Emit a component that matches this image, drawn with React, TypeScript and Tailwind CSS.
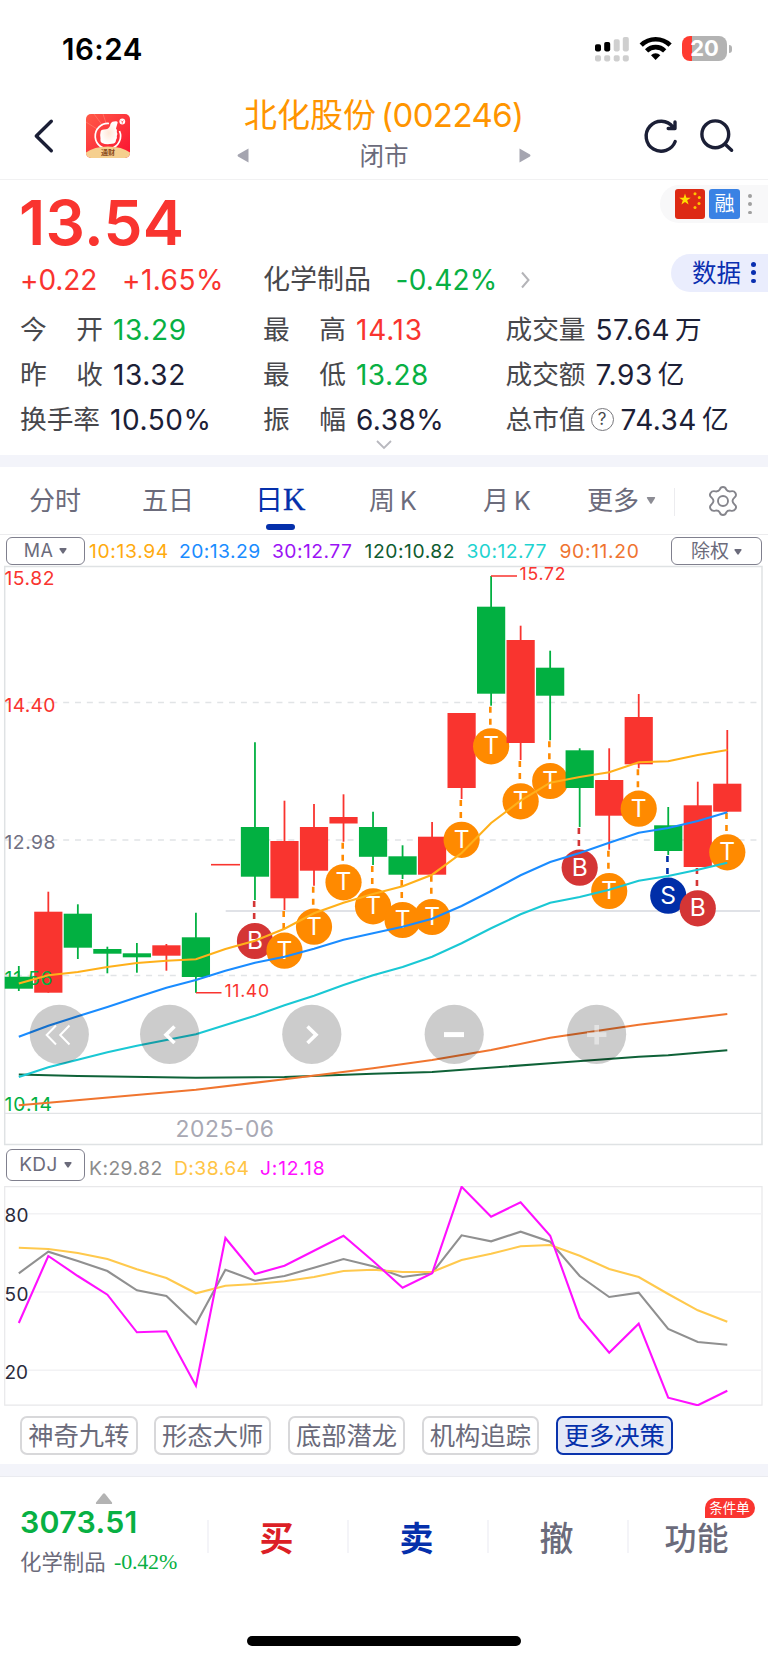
import React from "react";

const RED = "#f9342f";
const GREEN = "#02b041";
const ORANGE = "#ff8a00";
const BUY = "#d43535";
const SELL = "#002ea8";

type Mark = { kind: "T" | "B" | "S"; y: number };
type Candle = { up: boolean; high: number; top: number; bottom: number; low: number; mark?: Mark };

const candles: (Candle | null)[] = [
  { up: false, high: 966, top: 976.7, bottom: 988.7, low: 991 },
  { up: true, high: 891.7, top: 911.7, bottom: 992.7, low: 992.7 },
  { up: false, high: 904.3, top: 913.7, bottom: 947.7, low: 959 },
  { up: false, high: 946.7, top: 949, bottom: 953.7, low: 973.3 },
  { up: false, high: 943, top: 953.3, bottom: 957.3, low: 972.7 },
  { up: true, high: 944, top: 945.3, bottom: 955.7, low: 970.7 },
  { up: false, high: 912.7, top: 937.3, bottom: 977, low: 992.7 },
  null,
  { up: false, high: 742.3, top: 827, bottom: 876.7, low: 900, mark: { kind: "B", y: 941 } },
  { up: true, high: 800.7, top: 841, bottom: 898.3, low: 910, mark: { kind: "T", y: 950.7 } },
  { up: true, high: 804, top: 827, bottom: 870.7, low: 885.7, mark: { kind: "T", y: 926.7 } },
  { up: true, high: 794.3, top: 817, bottom: 823.5, low: 841.7, mark: { kind: "T", y: 882.3 } },
  { up: false, high: 811.7, top: 827, bottom: 856.8, low: 865, mark: { kind: "T", y: 906.3 } },
  { up: false, high: 845.3, top: 856.3, bottom: 874.7, low: 879, mark: { kind: "T", y: 920 } },
  { up: true, high: 822, top: 836.7, bottom: 874.7, low: 874.7, mark: { kind: "T", y: 917 } },
  { up: true, high: 713, top: 713, bottom: 788, low: 799, mark: { kind: "T", y: 839.8 } },
  { up: false, high: 576, top: 606.7, bottom: 693.7, low: 705.7, mark: { kind: "T", y: 746.3 } },
  { up: true, high: 625.7, top: 640, bottom: 743, low: 760, mark: { kind: "T", y: 801.3 } },
  { up: false, high: 650.7, top: 667.7, bottom: 695.7, low: 740.3, mark: { kind: "T", y: 781 } },
  { up: false, high: 748.3, top: 750.3, bottom: 788, low: 827, mark: { kind: "B", y: 867.7 } },
  { up: true, high: 748.3, top: 780, bottom: 815.7, low: 849.7, mark: { kind: "T", y: 891 } },
  { up: true, high: 694, top: 717, bottom: 764.3, low: 768.3, mark: { kind: "T", y: 808.7 } },
  { up: false, high: 807, top: 825.3, bottom: 851, low: 855, mark: { kind: "S", y: 895.7 } },
  { up: true, high: 781.7, top: 805.3, bottom: 867, low: 867, mark: { kind: "B", y: 908.3 } },
  { up: true, high: 730, top: 783.7, bottom: 811.7, low: 812, mark: { kind: "T", y: 852.3 } },
];

const cx = (i: number) => 18.8 + 29.52 * i;
const line = (ys: number[]) => ys.map((y, i) => `${cx(i).toFixed(1)},${y}`).join(" ");
const sparse = (ps: number[][]) => ps.map(([i, y]) => `${cx(i).toFixed(1)},${y}`).join(" ");

const ma10 = [983.5, 975.3, 972, 967, 963, 960.7, 959.3, 949, 940.7, 928.7, 913.3, 902.7, 894, 886.3, 874.7, 853, 823, 800.7, 782.7, 777, 772.3, 762.3, 761.3, 755, 750];
const ma20 = [1036.7, 1025.7, 1016.3, 1007, 997.3, 987.7, 980, 970.7, 962.7, 956.7, 948.7, 939.7, 933.3, 926.7, 918.7, 906, 891, 875.3, 862, 853, 842.7, 832.7, 828, 821, 812.3];
const ma30 = [1077, 1067.3, 1059.7, 1052.3, 1045.7, 1040, 1034.3, 1025, 1015.7, 1005.3, 995.7, 985, 975.3, 967, 956.7, 943.3, 928.3, 914.3, 902.7, 897, 889.7, 880.7, 876, 869.7, 862.7];
const ma120 = [[0, 1074.5], [2, 1076], [6, 1077.7], [9, 1077], [12, 1073.8], [14, 1072], [18, 1063.3], [21, 1056.7], [22, 1055.3], [24, 1050.3]];
const ma90 = [[0, 1105.3], [1, 1102.7], [6, 1089.7], [9, 1079.3], [12, 1068.3], [14, 1060], [16, 1050], [18, 1037.7], [21, 1024.7], [24, 1014]];

const kLine = [1273.3, 1251.7, 1261, 1271, 1290.3, 1296, 1324, 1269.7, 1280.7, 1276, 1267.7, 1259, 1266.3, 1277, 1273, 1235.3, 1241.3, 1231.7, 1241.7, 1276, 1297, 1292.7, 1329, 1342, 1344.7];
const dLine = [1247.7, 1249, 1253, 1259, 1269.3, 1278, 1293.3, 1285.7, 1284, 1281.3, 1277, 1271, 1269.7, 1272, 1272, 1260, 1253.7, 1246.3, 1245, 1255.7, 1269, 1277, 1294, 1310.3, 1321.7];
const jLine = [1323, 1256, 1276, 1294.7, 1332.3, 1331.3, 1385.7, 1238, 1274, 1265.7, 1250.7, 1235.7, 1261, 1287.7, 1273.3, 1186.8, 1216.7, 1202.3, 1235.7, 1317.7, 1352.7, 1323.7, 1397.7, 1405.3, 1390.7];

const INTER = 'Inter, "Noto Sans CJK SC", sans-serif';

function CandleShape({ c, x }: { c: Candle; x: number }) {
  const color = c.up ? RED : GREEN;
  const m = c.mark;
  const mc = m ? (m.kind === "T" ? ORANGE : m.kind === "B" ? BUY : SELL) : "";
  return (
    <g>
      <line x1={x} x2={x} y1={c.high} y2={c.low} stroke={color} strokeWidth="1.8" />
      <rect x={x - 14.1} y={c.top} width="28.2" height={c.bottom - c.top} fill={color} />
      {m && (
        <g>
          <line x1={x - 0.8} x2={x - 0.8} y1={c.low + 1} y2={m.y - 18} stroke={mc} strokeWidth="2.6" strokeDasharray="6 6" />
          <circle cx={x} cy={m.y} r="18.1" fill={mc} />
          <text x={x} y={m.y + 7.8} textAnchor="middle" fontSize="24.5" fill="#fff" fontFamily={INTER}>
            {m.kind}
          </text>
        </g>
      )}
    </g>
  );
}

function PriceChart() {
  return (
    <svg className="block h-[580px] w-[768px] overflow-visible" viewBox="0 566 768 580" fill="none">
      <path d="M4.7 1144.5V566.6H762V1144.5Z" stroke="#dfe2e4" strokeWidth="1.5" />
      <path d="M4.7 1113.4H762" stroke="#e2e4e6" strokeWidth="1.2" />
      {[702.4, 840.1, 975.6].map((y) => (
        <line key={y} x1="4.7" x2="762" y1={y} y2={y} stroke="#e1e4e6" strokeWidth="1.5" strokeDasharray="6 5.85" strokeDashoffset="0.8" />
      ))}
      <path d="M225.7 911H760" stroke="#e0e2e7" strokeWidth="2" />
      <path d="M211 864.7H240" stroke={RED} strokeWidth="1.6" />
      {candles.map((c, i) => (c ? <CandleShape key={i} c={c} x={cx(i)} /> : null))}
      <g fontFamily={INTER} fontSize="19.3">
        <text x="4.5" y="585.3" fill={RED} textLength="50">15.82</text>
        <text x="4.5" y="711.7" fill={RED} textLength="51">14.40</text>
        <text x="4.5" y="849.3" fill="#707082" textLength="51">12.98</text>
        <text x="4.5" y="985" fill={GREEN} textLength="48">11.56</text>
        <text x="4.5" y="1111" fill={GREEN} textLength="47.5">10.14</text>
      </g>
      <g strokeWidth="2.1">
        <polyline points={sparse(ma120)} stroke="#0f6238" />
        <polyline points={sparse(ma90)} stroke="#f0752f" />
        <polyline points={line(ma30)} stroke="#1ac8d4" />
        <polyline points={line(ma20)} stroke="#1a8cff" />
        <polyline points={line(ma10)} stroke="#ffb01a" />
      </g>
      <path d="M491 576H517M196 992.7H221.5" stroke={RED} strokeWidth="1.6" />
      <g fontFamily={INTER} fontSize="17.6" fill={RED}>
        <text x="519.5" y="579.8" textLength="46">15.72</text>
        <text x="224.5" y="996.8" textLength="44.5">11.40</text>
      </g>
      <text x="175.5" y="1136.5" fontFamily={INTER} fontSize="22.8" fill="#a8a8b3" textLength="98.5">2025-06</text>
      <g fill="#000" fillOpacity="0.2">
        {[59.3, 169.6, 311.8, 454.2, 596.6].map((x) => (
          <circle key={x} cx={x} cy="1034.3" r="29.6" />
        ))}
      </g>
      <g stroke="#fff">
        <path d="M56 1025.5L46.7 1035L56 1044.5M69.5 1025.5L60.2 1035L69.5 1044.5" strokeWidth="2" />
        <path d="M174.5 1026.5L166 1034.7L174.5 1043" strokeWidth="3.6" />
        <path d="M307.5 1026.5L316 1034.7L307.5 1043" strokeWidth="3.6" />
        <path d="M444 1034.6H464" strokeWidth="5" />
        <path d="M587 1034.6H606.4M596.7 1025V1044.5" strokeWidth="4.6" strokeOpacity="0.45" />
      </g>
    </svg>
  );
}

function KdjChart() {
  return (
    <svg className="block h-[220px] w-[768px]" viewBox="0 1186 768 220" fill="none">
      <path d="M4.7 1186.7H762V1405.2H4.7Z" stroke="#e8e8ea" strokeWidth="1.2" />
      {[1213.8, 1292, 1370.3].map((y) => (
        <path key={y} d={`M5 ${y}H762`} stroke="#f2f2f4" strokeWidth="1.6" />
      ))}
      <g fontFamily={INTER} fontSize="19" fill="#2b2b3c">
        <text x="4.5" y="1221.8" textLength="24">80</text>
        <text x="4.5" y="1300.5" textLength="24">50</text>
        <text x="4.5" y="1379" textLength="23.5">20</text>
      </g>
      <g strokeWidth="2.1">
        <polyline points={line(kLine)} stroke="#909090" />
        <polyline points={line(dLine)} stroke="#ffc94d" />
        <polyline points={line(jLine)} stroke="#ff10ff" />
      </g>
    </svg>
  );
}

function StatusBar() {
  return (
    <div className="flex h-[92px] items-start">
      <div className="w-[595px] pl-[62px] pt-[31px] text-[29.5px] leading-[36px] font-semibold tracking-[0.5px] text-black">16:24</div>
      <svg className="mt-[36px] h-[26px] w-[36px]" viewBox="595 36 36 26">
        <rect x="595" y="44.2" width="6" height="7.2" rx="1.8" />
        <rect x="604.2" y="42" width="6" height="9.4" rx="1.8" />
        <g fill="#cfcfcf">
          <rect x="613.7" y="39.3" width="6" height="12.1" rx="1.8" />
          <rect x="622.8" y="37" width="6" height="14.4" rx="1.8" />
          {[595, 604.2, 613.7, 622.8].map((x) => (
            <rect key={x} x={x} y="55.2" width="6" height="6.2" rx="1.8" />
          ))}
        </g>
      </svg>
      <svg className="ml-[8px] mt-[35px] h-[26px] w-[34px]" viewBox="639 35 34 26" fill="none" stroke="#000">
        <path d="M641.2 45.2A20.7 20.7 0 0 1 670.1 45.2" strokeWidth="4.6" />
        <path d="M646.6 50.8A13 13 0 0 1 664.7 50.8" strokeWidth="4.6" />
        <path d="M655.6 60L651 55.2A6.6 6.6 0 0 1 660.3 55.2Z" fill="#000" stroke="none" />
      </svg>
      <div className="ml-[9px] mt-[36px] flex items-center">
        <div className="flex h-[25px] w-[45px] items-center justify-center rounded-[8px] bg-[linear-gradient(90deg,#ff3b30_0_9.5px,#b3b3b3_9.5px)] text-[22px] leading-[25px] font-bold text-white">20</div>
        <div className="ml-[2px] h-[8px] w-[3px] rounded-r-full bg-[#b3b3b3]" />
      </div>
    </div>
  );
}

function Header() {
  return (
    <div className="flex h-[88px] border-b-[1.5px] border-[#f1f1f2]">
      <svg className="ml-[33px] mt-[26px] h-[36px] w-[22px] shrink-0" viewBox="34 118 22 36" fill="none">
        <path d="M52.3 121.3L37.3 136L52.3 150.8" stroke="#1b1f36" strokeWidth="3.4" strokeLinecap="round" strokeLinejoin="round" />
      </svg>
      <svg className="ml-[31px] mt-[22px] h-[44px] w-[44px] shrink-0" viewBox="0 0 44 44">
        <defs>
          <linearGradient id="logoRed" x1="0" y1="0" x2="1" y2="1">
            <stop offset="0" stopColor="#ff5a48" />
            <stop offset="1" stopColor="#fb1030" />
          </linearGradient>
          <clipPath id="logoClip"><rect width="44" height="44" rx="5" /></clipPath>
          <radialGradient id="thumb"><stop offset="0" stopColor="#ffe8d8" /><stop offset="1" stopColor="#fff" /></radialGradient>
        </defs>
        <g clipPath="url(#logoClip)">
          <rect width="44" height="44" fill="url(#logoRed)" />
          <path d="M8 0L17 12M17 0L20 9M0 8L11 15" stroke="#ff8573" strokeWidth="1" strokeOpacity="0.6" />
          <path d="M23 9.500A12.700 12.700 0 1 0 33.500 17" fill="none" stroke="#fff" strokeWidth="1.700" />
          <path d="M14.500 18.500Q14.500 15.500 18 15.500Q22.500 15.500 24 12Q24.500 7.500 28 7.500Q31.500 6.800 31.700 8.500Q31 11 30 14.500Q31.500 15.500 30.800 18Q32 20 30.800 22Q31.500 24.500 30 26Q30 29.500 26 29.800Q20 31 16 29Q14 28 14.500 24.500Q13.800 21 14.500 18.500Z" fill="url(#thumb)" />
          <circle cx="36.300" cy="7.500" r="2.900" fill="#fff" />
          <path d="M35 6.500L36.300 7.900L37.600 6.500M36.300 7.800V9.500" stroke="#f33" strokeWidth="0.700" fill="none" />
          <path d="M0 44V38.500Q8 32.500 22 32.500T44 38.500V44Z" fill="#f5cf8e" />
          <text x="22" y="41.200" fontSize="7" fontWeight="700" textAnchor="middle" fill="#8a4a1c" fontFamily="'Noto Sans CJK SC', sans-serif">通财</text>
        </g>
      </svg>
      <div className="ml-[107px] w-[294px]">
        <div className="flex h-[46px] items-center pl-[7px] pt-[1px] text-[33px] whitespace-nowrap text-[#ff9500]">
          <span className="w-[137px]">北化股份</span>
          <span className="tracking-[-0.600px]">(002246)</span>
        </div>
        <div className="flex h-[34px] items-center justify-between pt-[1px]">
          <svg className="h-[15px] w-[12px]" viewBox="0 0 12 14" preserveAspectRatio="none"><path d="M11.500 0.500V13.500L1 8Q0 7 1 6Z" fill="#a5a5b0" /></svg>
          <span className="pt-[1px] text-[24.500px] leading-[30px] text-[#6b6b7b]">闭市</span>
          <svg className="h-[15px] w-[12px]" viewBox="0 0 12 14" preserveAspectRatio="none"><path d="M0.500 0.500V13.500L11 8Q12 7 11 6Z" fill="#a5a5b0" /></svg>
        </div>
      </div>
      <svg className="ml-[112px] mt-[24px] h-[40px] w-[92px]" viewBox="643 116 92 40" fill="none" stroke="#1b1f36" strokeWidth="3.400" strokeLinecap="round" strokeLinejoin="round">
        <path d="M675.200 141.500A15 15 0 1 1 673 127M675 122V128.500H668.200" />
        <circle cx="715.300" cy="134.300" r="13.400" />
        <path d="M725.700 144.700L731.600 150.300" />
      </svg>
    </div>
  );
}

function Pair({ a, b }: { a: string; b: string }) {
  return (
    <span className="flex w-[83px] justify-between">
      <span>{a}</span>
      <span>{b}</span>
    </span>
  );
}

function Num({ children, className }: { children: React.ReactNode; className: string }) {
  return <span className={`ml-[10px] text-[28px] ${className}`}>{children}</span>;
}

function Dots({ className }: { className: string }) {
  return (
    <span className="flex flex-col justify-between">
      <i className={className} />
      <i className={className} />
      <i className={className} />
    </span>
  );
}

function Quote() {
  const dark = "text-[#1c2036]";
  const red = "text-[#f9342f]";
  const green = "text-[#08b043]";
  return (
    <div className="flex h-[275px] flex-col whitespace-nowrap">
      <div className="flex h-[76px] justify-between">
        <div className="pl-[19px] pt-[5.500px] text-[62px] leading-[74px] font-semibold tracking-[0.300px] text-[#f9342f]">13.54</div>
        <div className="mt-[5px] flex h-[38px] w-[108px] items-center rounded-l-full bg-[#f8f8f9] pl-[15px]">
          <svg className="h-[30px] w-[30px] rounded-[3px]" viewBox="0 0 30 30">
            <rect width="30" height="30" fill="#dd2a14" />
            <path d="M10 4.500L11.400 8.700H15.800L12.200 11.300L13.600 15.500L10 12.900L6.400 15.500L7.800 11.300L4.200 8.700H8.600Z" fill="#ffde00" />
            <g fill="#ffc400">
              <circle cx="20" cy="4.700" r="1.500" />
              <circle cx="24.300" cy="8.500" r="1.500" />
              <circle cx="24" cy="14.500" r="1.500" />
              <circle cx="20" cy="18.500" r="1.500" />
            </g>
          </svg>
          <span className="ml-[4px] flex h-[30px] w-[31px] items-center justify-center rounded-[3px] bg-[#3a82e4] text-[20px] text-white">融</span>
          <span className="ml-[8px] flex h-[20px]"><Dots className="block size-[3.500px] rounded-full bg-[#a0a0a0]" /></span>
        </div>
      </div>
      <div className="flex h-[50px]">
        <div className="flex h-[48.500px] w-[671px] items-center pl-[20px] text-[28px]">
          <span className={`w-[102px] tracking-[-0.100px] ${red}`}>+0.22</span>
          <span className={`w-[141px] tracking-[0.450px] ${red}`}>+1.65%</span>
          <span className="w-[132.500px] text-[27px] text-[#48484c]">化学制品</span>
          <span className={`w-[125.500px] tracking-[0.250px] ${green}`}>-0.42%</span>
          <svg className="h-[18px] w-[10px]" viewBox="0 0 10 18" fill="none"><path d="M1 1.500L7.500 9L1 16.500" stroke="#b4b4b8" strokeWidth="2" /></svg>
        </div>
        <div className="mt-[-2.500px] flex h-[38px] w-[97px] items-center rounded-l-full bg-[#eaedfd] pl-[21px] pt-[2px] text-[24.500px] text-[#0a2fb0]">
          数据
          <span className="ml-[10px] mt-[-2px] flex h-[21px]"><Dots className="block size-[4.500px] rounded-full bg-[#0a2fb0]" /></span>
        </div>
      </div>
      <div className="grid grid-cols-[243px_242.500px_1fr] grid-rows-[45px_45px_45px] items-center pt-[1px] pl-[20px] text-[26.700px] text-[#48484c]">
        <div className="flex items-center"><Pair a="今" b="开" /><Num className={`${green} tracking-[0.650px]`}>13.29</Num></div>
        <div className="flex items-center"><Pair a="最" b="高" /><Num className={`${red} tracking-[0.800px]`}>14.13</Num></div>
        <div className="flex items-center">成交量<Num className={`${dark} tracking-[0.450px]`}>57.64</Num><span className={`ml-[5px] ${dark}`}>万</span></div>
        <div className="flex items-center"><Pair a="昨" b="收" /><Num className={`${dark} tracking-[0.650px]`}>13.32</Num></div>
        <div className="flex items-center"><Pair a="最" b="低" /><Num className={`${green} tracking-[0.450px]`}>13.28</Num></div>
        <div className="flex items-center">成交额<Num className={`${dark} tracking-[0.600px]`}>7.93</Num><span className={`ml-[5px] ${dark}`}>亿</span></div>
        <div className="flex items-center">换手率<Num className={`${dark} tracking-[0.550px]`}>10.50%</Num></div>
        <div className="flex items-center"><Pair a="振" b="幅" /><Num className={`${dark} tracking-[0.450px]`}>6.38%</Num></div>
        <div className="flex items-center">
          总市值
          <span className="ml-[5px] mr-[-3px] flex size-[23px] items-center justify-center rounded-full border-[1.500px] border-[#77777c] text-[17px] leading-none">?</span>
          <Num className={`${dark} tracking-[0.450px]`}>74.34</Num><span className={`ml-[5px] ${dark}`}>亿</span>
        </div>
      </div>
      <svg className="mx-auto mt-[-2px] h-[10px] w-[16px] shrink-0" viewBox="0 0 16 10" fill="none"><path d="M1 1L8 8L15 1" stroke="#b8b8be" strokeWidth="1.800" /></svg>
    </div>
  );
}

function Caret({ className }: { className: string }) {
  return (
    <svg className={className} viewBox="0 0 10 8"><path d="M1 0H9Q10.200 0.300 9.500 1.500L6 7Q5 8.200 4 7L0.500 1.500Q-0.200 0.300 1 0Z" /></svg>
  );
}

function Tabs() {
  return (
    <div className="flex h-[68px] items-start border-b-[1.500px] border-[#ececee] pt-[14px] text-[26px] leading-[40px] whitespace-nowrap text-[#6b6b7b]">
      <span className="ml-[29px] w-[113px]">分时</span>
      <span className="w-[113px]">五日</span>
      <span className="mt-[-1px] flex w-[114px] flex-col text-[28px] text-[#0530ab]">
        <span className="flex h-[44px]">日<span className="font-['Liberation_Serif'] text-[31px] leading-[39px] [-webkit-text-stroke:0.300px_#0530ab]">K</span></span>
        <span className="ml-[11px] h-[6px] w-[29px] rounded-full bg-[#0530ab]" />
      </span>
      <span className="w-[114px]">周<span className="ml-[5px] text-[25px]">K</span></span>
      <span className="w-[104px]">月<span className="ml-[5px] text-[25px]">K</span></span>
      <span>更多</span>
      <Caret className="ml-[7px] mt-[16px] h-[7px] w-[10px] fill-[#8c8c94]" />
      <span className="ml-[18px] mt-[7px] h-[28px] w-px bg-[#ececef]" />
      <svg className="ml-[33px] mt-[4px] h-[32px] w-[30px]" viewBox="-15 -16 30 32" fill="none" stroke="#85858c" strokeWidth="1.900" strokeLinejoin="round">
        <path d="M-3.200 -11.500Q-2.500 -14 0 -14T3.200 -11.500Q4.500 -9.300 7.500 -9.600Q11 -10.500 12.400 -8T11.800 -3.800Q9.500 -1.500 9.500 0T11.800 3.800Q14 5.500 12.400 8T7.500 9.600Q4.500 9.300 3.200 11.500Q2.500 14 0 14T-3.200 11.500Q-4.500 9.300 -7.500 9.600Q-11 10.500 -12.400 8T-11.800 3.800Q-9.500 1.500 -9.500 0T-11.800 -3.800Q-14 -5.500 -12.400 -8T-7.500 -9.600Q-4.500 -9.300 -3.200 -11.500Z" />
        <circle r="5" />
      </svg>
    </div>
  );
}

function MaRow() {
  return (
    <div className="flex h-[31px] items-center whitespace-nowrap text-[19.300px] leading-[28px] tracking-[0.450px]">
      <span className="ml-[6px] flex h-[28px] w-[79px] items-center justify-center rounded-[6px] border-[1.500px] border-[#80808e] text-[18px] text-[#6b6b7b]">
        MA<Caret className="ml-[6px] h-[6px] w-[8px] fill-[#6b6b7b]" />
      </span>
      <span className="ml-[4px] w-[90px] tracking-[0.650px] text-[#ffab0f]">10:13.94</span>
      <span className="w-[93px] text-[#1a8cff]">20:13.29</span>
      <span className="w-[92.500px] text-[#9b13f5]">30:12.77</span>
      <span className="w-[102px] tracking-[0.550px] text-[#0f5c30]">120:10.82</span>
      <span className="w-[93px] text-[#1fd3d0]">30:12.77</span>
      <span className="w-[111.500px] tracking-[0.650px] text-[#ef7430]">90:11.20</span>
      <span className="flex h-[28px] w-[91px] items-center justify-center rounded-[6px] border-[1.500px] border-[#80808e] pt-[2px] text-[19px] tracking-normal text-[#6b6b7b]">
        除权<Caret className="ml-[5px] h-[6px] w-[8px] fill-[#6b6b7b]" />
      </span>
    </div>
  );
}

function KdjRow() {
  return (
    <div className="flex h-[40px] items-start pt-[3px] whitespace-nowrap text-[19.300px] leading-[38px] tracking-[0.450px]">
      <span className="ml-[6px] flex h-[32px] w-[79px] items-center justify-center rounded-[6px] border-[1.500px] border-[#80808e] text-[19px] text-[#6b6b7b]">
        KDJ<Caret className="ml-[6px] h-[6px] w-[8px] fill-[#6b6b7b]" />
      </span>
      <span className="ml-[4px] w-[85px] text-[#8c8c8c]">K:29.82</span>
      <span className="w-[86px] text-[#ffc445]">D:38.64</span>
      <span className="tracking-[0.800px] text-[#ff10ff]">J:12.18</span>
    </div>
  );
}

function Strategies() {
  const chip = "flex h-[39px] w-[117.500px] items-center justify-center rounded-[7px] border-2";
  return (
    <div className="flex h-[58px] gap-[16.400px] pl-[20px] pt-[10px] text-[25.300px] leading-[34px] whitespace-nowrap text-[#6b6b7b]">
      {["神奇九转", "形态大师", "底部潜龙", "机构追踪"].map((t) => (
        <span key={t} className={`${chip} border-[#d8d8da]`}>{t}</span>
      ))}
      <span className={`${chip} border-[#0a34ad] bg-[#e4e9f7] text-[#0530ab]`}>更多决策</span>
    </div>
  );
}

function TradeBar() {
  const cell = "flex h-[33px] w-[140px] items-center justify-center border-l-2 border-[#f4f4f8] pt-[4px] leading-[33px]";
  return (
    <div className="flex h-[159px] items-start whitespace-nowrap">
      <div className="w-[206.500px] pl-[20px] pt-[16px]">
        <svg className="ml-[74.500px] h-[11px] w-[18px]" viewBox="0 0 18 11"><path d="M8 0.800Q9 -0.200 10 0.800L17 9.500Q17.500 11 16 11H2Q0.500 11 1 9.500Z" fill="#b3b3b3" /></svg>
        <div className="text-[30.300px] leading-[36px] font-semibold tracking-[0.300px] text-[#08b043]">3073.51</div>
        <div className="flex items-center pt-[6px] text-[21.400px] leading-[32px] text-[#6b6b7b]">
          化学制品<span className="ml-[8.500px] font-['Liberation_Serif'] text-[22px] tracking-[-0.200px] text-[#08b043]">-0.42%</span>
        </div>
      </div>
      <div className="flex pt-[43px]">
        <span className={`${cell} pr-[2px] text-[34px] font-bold text-[#dc1f26]`}>买</span>
        <span className={`${cell} pr-[2px] text-[34px] font-bold text-[#0530ab]`}>卖</span>
        <span className={`${cell} pr-[2px] text-[34px] font-medium text-[#6b6b7b]`}>撤</span>
        <span className={`${cell} relative pr-[2px] text-[32px] font-medium text-[#6b6b7b]`}>
          功能
          <b className="absolute top-[-22px] left-[76px] flex h-[20px] w-[50px] items-center justify-center rounded-[10px] rounded-bl-none bg-[#fa3530] pt-px text-[13.500px] leading-[19px] font-normal text-white">条件单</b>
        </span>
      </div>
    </div>
  );
}

export default function App() {
  return (
    <div className="flex h-[1663px] w-[768px] flex-col overflow-hidden bg-white font-[Inter,'Noto_Sans_CJK_SC',sans-serif]">
      <StatusBar />
      <Header />
      <Quote />
      <div className="h-[12px] shrink-0 bg-[#f3f4fa]" />
      <Tabs />
      <MaRow />
      <PriceChart />
      <KdjRow />
      <KdjChart />
      <Strategies />
      <div className="h-[13px] shrink-0 border-b border-[#eaebf0] bg-[#f3f4fa]" />
      <TradeBar />
      <div className="mx-auto h-[10px] w-[274px] rounded-full bg-black" />
    </div>
  );
}
